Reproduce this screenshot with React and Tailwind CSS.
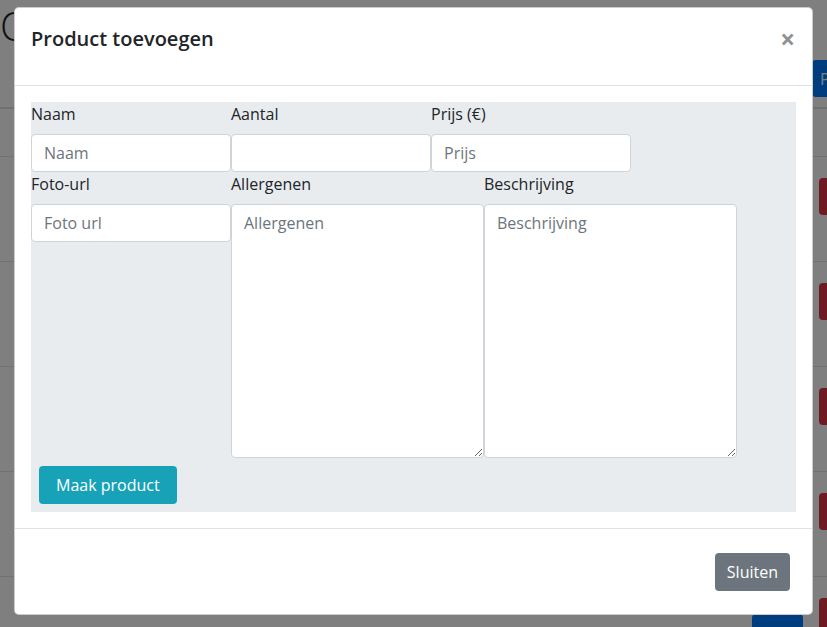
import React from 'react'

const rows = [0, 1, 2, 3, 4]

function Field({ label, placeholder, className }) {
  return (
    <div className={className}>
      <label className="block h-6 leading-6 text-[16px] text-[#212529]">{label}</label>
      <input
        placeholder={placeholder}
        className="mt-2 block h-[38px] w-full rounded-[4px] border border-[#ced4da] bg-white px-3 text-[16px] text-[#495057] placeholder:text-[#6c757d] outline-none"
      />
    </div>
  )
}

function Area({ label, placeholder }) {
  return (
    <div className="w-[253px]">
      <label className="block h-6 leading-6 text-[16px] text-[#212529]">{label}</label>
      <textarea
        placeholder={placeholder}
        className="mt-2 block h-[254px] w-full rounded-[4px] border border-[#ced4da] bg-white px-3 py-[6px] text-[16px] leading-6 text-[#495057] placeholder:text-[#6c757d] outline-none"
      />
    </div>
  )
}

export default function App() {
  return (
    <div className="relative h-[627px] w-[827px] overflow-hidden bg-white font-['Open_Sans',sans-serif]">
      {/* page behind the modal */}
      <div className="w-[900px]">
        <h1 className="h-[50px] pt-[2px] text-[40px] font-light leading-[48px] text-[#212529]">Overzicht producten</h1>
        <div className="h-[57px] pl-[812px] pt-[10px]">
          <button className="h-[37px] rounded-[4px] bg-[#007bff] px-2 text-[16px] text-white">Product</button>
        </div>
        <div className="h-[49px] border-t-2 border-[#dee2e6]" />
        {rows.map((r) => (
          <div key={r} className="flex h-[105px] items-start border-t border-[#dee2e6] pl-[752px]">
            <button className="mt-[37px] h-[38px] w-[51px] rounded-[4px] bg-[#007bff] text-[16px] text-white">Edit</button>
            <button className="ml-4 mt-[21px] h-[37px] w-[70px] rounded-[4px] bg-[#dc3545] text-[16px] text-white">Delete</button>
          </div>
        ))}
      </div>

      {/* backdrop */}
      <div className="absolute inset-0 bg-black/50" />

      {/* modal */}
      <div className="absolute left-[14px] top-[7px] w-[799px] rounded-[5px] border border-black/20 bg-white">
        <div className="flex h-[78px] items-start justify-between border-b border-[#dee2e6] pl-4 pr-[17px] pt-4">
          <h5 className="text-[20px] font-semibold leading-[30px] text-[#212529]">Product toevoegen</h5>
          <span className="mt-[2px] text-[26px] font-bold leading-[26px] text-[#212529] opacity-50">×</span>
        </div>

        <div className="p-4">
          <div className="bg-[#e9ecef]">
            <div className="flex">
              <Field className="w-[200px]" label="Naam" placeholder="Naam" />
              <Field className="w-[200px]" label="Aantal" placeholder="" />
              <Field className="w-[200px]" label="Prijs (€)" placeholder="Prijs" />
            </div>
            <div className="flex items-start">
              <Field className="w-[200px]" label="Foto-url" placeholder="Foto url" />
              <Area label="Allergenen" placeholder="Allergenen" />
              <Area label="Beschrijving" placeholder="Beschrijving" />
            </div>
            <div className="p-2">
              <button className="h-[38px] rounded-[4px] bg-[#17a2b8] px-[17px] text-[16px] text-white">Maak product</button>
            </div>
          </div>
        </div>

        <div className="flex h-[86px] items-center justify-end border-t border-[#dee2e6] pr-[22px]">
          <button className="h-[38px] rounded-[4px] bg-[#6c757d] px-3 text-[16px] text-white">Sluiten</button>
        </div>
      </div>
    </div>
  )
}
